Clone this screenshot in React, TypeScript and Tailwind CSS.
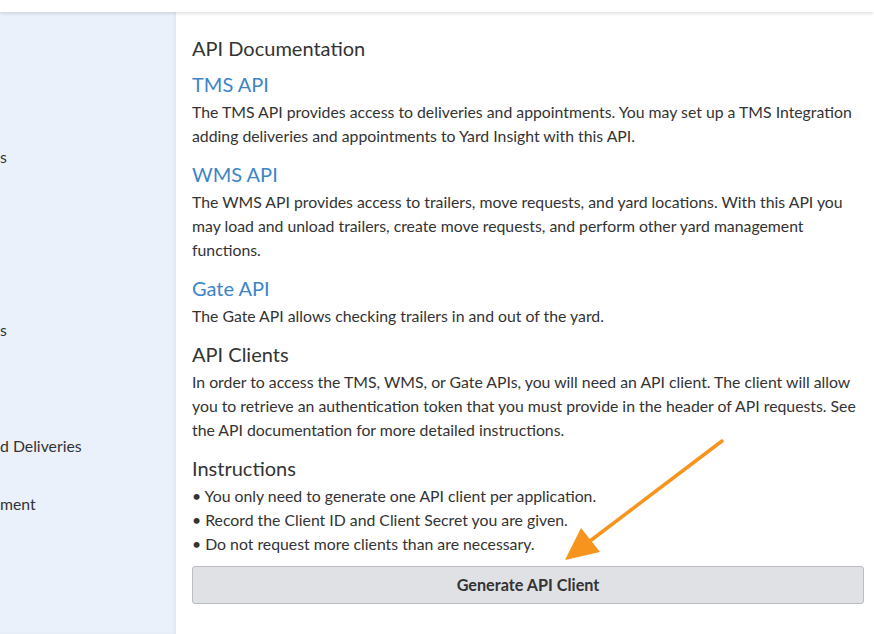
export default function App() {
  const font = { fontFamily: 'Lato, "Open Sans", sans-serif' };
  return (
    <div className="relative h-[634px] w-[874px] overflow-hidden bg-white text-[#333]" style={font}>
      <div className="relative z-10 h-3 bg-white shadow-[0_1px_4px_rgba(0,0,0,0.15)]" />
      <div className="flex h-[622px]">
        <div className="w-[176px] shrink-0 bg-[#ebf1fb] text-[15.8px] shadow-[inset_-2px_0_3px_rgba(0,0,0,0.04)]">
          <div className="mt-[133px] h-6 leading-6">s</div>
          <div className="mt-[149px] h-6 leading-6">s</div>
          <div className="mt-[92px] h-6 leading-6">d Deliveries</div>
          <div className="mt-[34px] h-6 leading-6">ment</div>
        </div>
        <div className="flex-1 pl-4 pr-[10px] text-[15.8px] leading-6">
          <h2 className="mt-[22px] text-[20px] leading-7">API Documentation</h2>
          <h3 className="mt-2 mb-[2px] text-[20px] leading-7 text-[#3d85c6]">TMS API</h3>
          <p>The TMS API provides access to deliveries and appointments. You may set up a TMS Integration adding deliveries and appointments to Yard Insight with this API.</p>
          <h3 className="mt-3 mb-[2px] text-[20px] leading-7 text-[#3d85c6]">WMS API</h3>
          <p>The WMS API provides access to trailers, move requests, and yard locations. With this API you may load and unload trailers, create move requests, and perform other yard management functions.</p>
          <h3 className="mt-3 mb-[2px] text-[20px] leading-7 text-[#3d85c6]">Gate API</h3>
          <p>The Gate API allows checking trailers in and out of the yard.</p>
          <h2 className="mt-3 mb-[2px] text-[20px] leading-7">API Clients</h2>
          <p>In order to access the TMS, WMS, or Gate APIs, you will need an API client. The client will allow you to retrieve an authentication token that you must provide in the header of API requests. See the API documentation for more detailed instructions.</p>
          <h2 className="mt-3 mb-[2px] text-[20px] leading-7">Instructions</h2>
          <ul>
            <li>• You only need to generate one API client per application.</li>
            <li>• Record the Client ID and Client Secret you are given.</li>
            <li>• Do not request more clients than are necessary.</li>
          </ul>
          <button className="mt-[10px] h-[38px] w-full rounded-[3px] border border-[#b9bcc2] bg-[#e0e1e5] text-[16.2px] font-bold text-[#333]">
            Generate API Client
          </button>
        </div>
      </div>
      <svg className="absolute left-0 top-0 pointer-events-none" width="874" height="634">
        <line x1="722" y1="441" x2="590" y2="541" stroke="#f7941d" strokeWidth="3.5" strokeLinecap="round" />
        <polygon points="565,560 581,528 600,552" fill="#f7941d" />
      </svg>
    </div>
  );
}
